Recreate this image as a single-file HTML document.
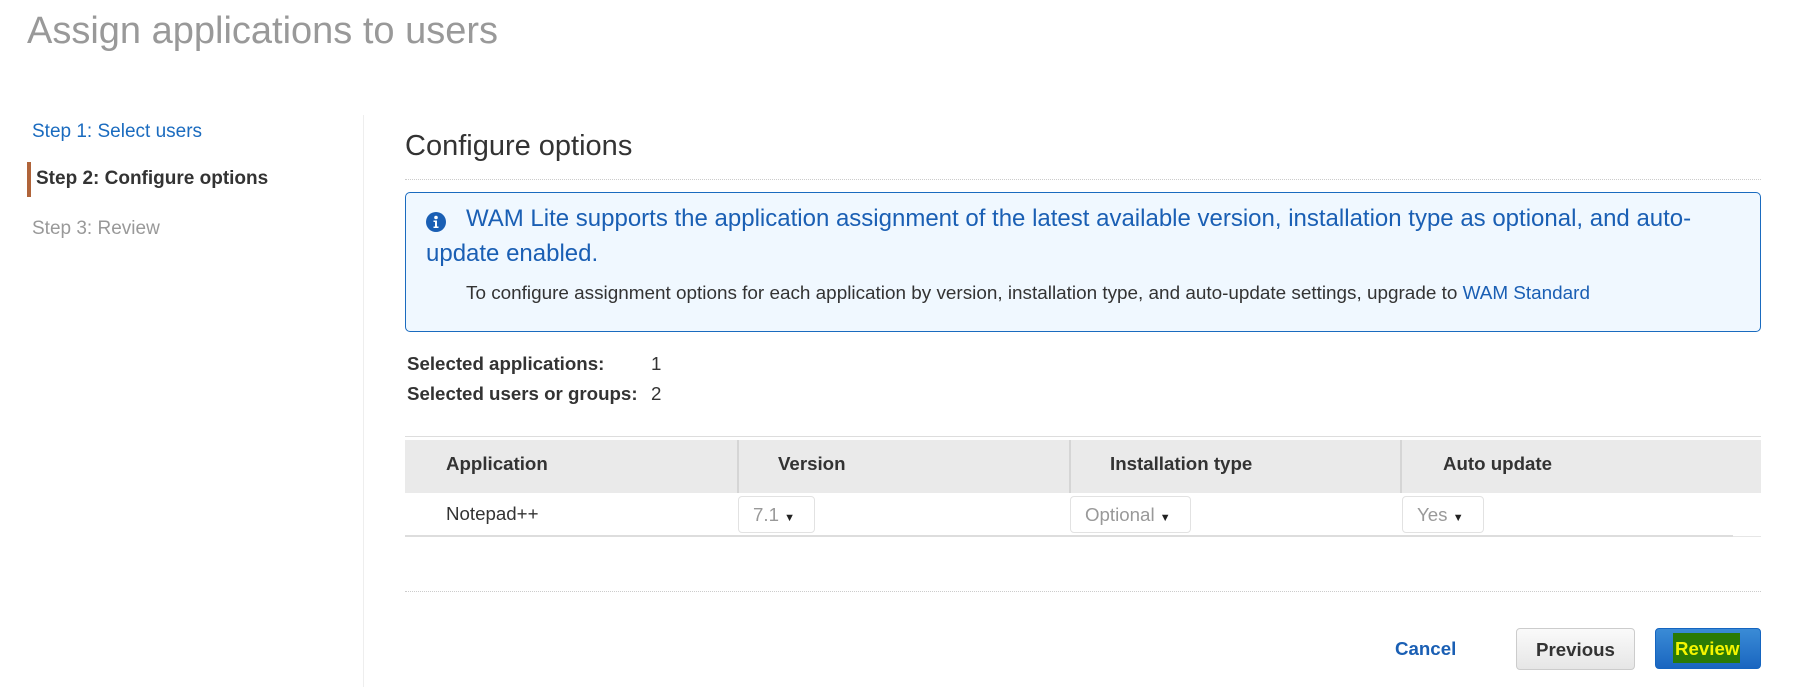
<!DOCTYPE html>
<html><head><meta charset="utf-8"><style>
*{margin:0;padding:0;box-sizing:border-box}
body{width:1797px;height:687px;background:#fff;font-family:"Liberation Sans",Arial,sans-serif;position:relative;overflow:hidden;color:#333}
.a{position:absolute;white-space:nowrap}
</style></head><body>
<div class="a" style="left:27px;top:10px;font-size:38px;color:#999">Assign applications to users</div>
<div class="a" style="left:32px;top:121px;font-size:19px;color:#1a6bbf">Step 1: Select users</div>
<div class="a" style="left:27px;top:162px;width:4px;height:35px;background:#b0643a"></div>
<div class="a" style="left:36px;top:168px;font-size:19px;font-weight:bold;color:#333">Step 2: Configure options</div>
<div class="a" style="left:32px;top:218px;font-size:19px;color:#999">Step 3: Review</div>
<div class="a" style="left:363px;top:115px;width:1px;height:572px;background:#eee"></div>

<div class="a" style="left:405px;top:130px;font-size:29px;color:#333">Configure options</div>
<div class="a" style="left:405px;top:179px;width:1356px;border-top:1px dotted #ccc"></div>

<div class="a" style="left:405px;top:192px;width:1356px;height:140px;border:1px solid #1a6bbf;border-radius:5px;background:#f0f8ff"></div>
<svg class="a" style="left:426px;top:212px" width="20" height="20" viewBox="0 0 20 20"><circle cx="10" cy="10" r="10" fill="#1a5fb4"/><circle cx="10" cy="5.5" r="1.8" fill="#fff"/><path d="M7.5 8.5h3.5v6h1.5v1.5h-5v-1.5h1.5v-4.5h-1.5z" fill="#fff"/></svg>
<div class="a" style="left:466px;top:205px;font-size:24px;color:#1a5fb4">WAM Lite supports the application assignment of the latest available version, installation type as optional, and auto-</div>
<div class="a" style="left:426px;top:240px;font-size:24px;color:#1a5fb4">update enabled.</div>
<div class="a" style="left:466px;top:283px;font-size:18.9px;color:#333">To configure assignment options for each application by version, installation type, and auto-update settings, upgrade to <span style="color:#1a5fb4">WAM Standard</span></div>

<div class="a" style="left:407px;top:353px;font-size:18.7px;font-weight:bold">Selected applications:</div>
<div class="a" style="left:651px;top:353px;font-size:18.7px">1</div>
<div class="a" style="left:407px;top:383px;font-size:18.7px;font-weight:bold">Selected users or groups:</div>
<div class="a" style="left:651px;top:383px;font-size:18.7px">2</div>

<div class="a" style="left:405px;top:436px;width:1356px;height:1px;background:#ddd"></div>
<div class="a" style="left:405px;top:440px;width:1356px;height:53px;background:#eaeaea"></div>
<div class="a" style="left:737px;top:440px;width:2px;height:53px;background:#d5d5d5"></div>
<div class="a" style="left:1069px;top:440px;width:2px;height:53px;background:#d5d5d5"></div>
<div class="a" style="left:1400px;top:440px;width:2px;height:53px;background:#d5d5d5"></div>
<div class="a" style="left:446px;top:453px;font-size:18.7px;font-weight:bold">Application</div>
<div class="a" style="left:778px;top:453px;font-size:18.7px;font-weight:bold">Version</div>
<div class="a" style="left:1110px;top:453px;font-size:18.7px;font-weight:bold">Installation type</div>
<div class="a" style="left:1443px;top:453px;font-size:18.7px;font-weight:bold">Auto update</div>

<div class="a" style="left:446px;top:503px;font-size:18.7px">Notepad++</div>
<div class="a" style="left:738px;top:496px;width:77px;height:37px;border:1px solid #e2e2e2;border-radius:4px;background:#fff;font-size:18.7px;color:#999;padding:7px 0 0 14px">7.1 <span style="color:#222;font-size:11px">&#9660;</span></div>
<div class="a" style="left:1070px;top:496px;width:121px;height:37px;border:1px solid #e2e2e2;border-radius:4px;background:#fff;font-size:18.7px;color:#999;padding:7px 0 0 14px">Optional <span style="color:#222;font-size:11px">&#9660;</span></div>
<div class="a" style="left:1402px;top:496px;width:82px;height:37px;border:1px solid #e2e2e2;border-radius:4px;background:#fff;font-size:18.7px;color:#999;padding:7px 0 0 14px">Yes <span style="color:#222;font-size:11px">&#9660;</span></div>
<div class="a" style="left:405px;top:535px;width:1328px;height:2px;background:#ddd"></div>
<div class="a" style="left:1733px;top:536px;width:28px;height:1px;background:#e6e6e6"></div>

<div class="a" style="left:405px;top:591px;width:1356px;border-top:1px dotted #ccc"></div>

<div class="a" style="left:1395px;top:638px;font-size:18.7px;font-weight:bold;color:#1a5fb4">Cancel</div>
<div class="a" style="left:1516px;top:628px;width:119px;height:42px;border:1px solid #ccc;border-radius:4px;background:linear-gradient(#fafafa,#e6e6e6);font-size:18.7px;font-weight:bold;text-align:center;padding-top:10px">Previous</div>
<div class="a" style="left:1655px;top:628px;width:106px;height:41px;border:1px solid #1565c0;border-radius:4px;background:linear-gradient(#3a8bd6,#1a66c0)"></div>
<div class="a" style="left:1673px;top:633px;width:67px;height:30px;background:#2a7a06"></div>
<div class="a" style="left:1675px;top:638px;font-size:18.7px;font-weight:bold;color:#f5f500">Review</div>
</body></html>
